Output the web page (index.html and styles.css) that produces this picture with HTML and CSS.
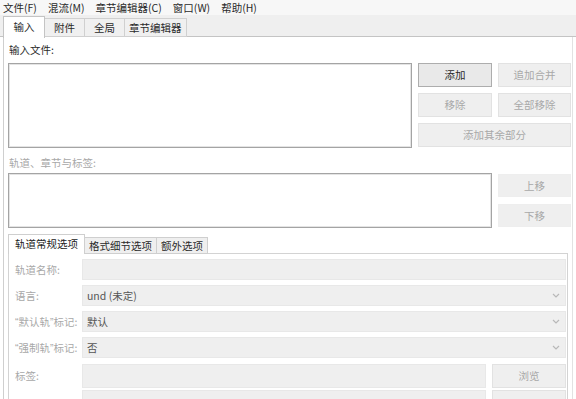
FILE: index.html
```html
<!DOCTYPE html>
<html lang="zh-CN">

<head>
  <meta charset="UTF-8">
  <title>MKVToolNix GUI</title>
  <link rel="stylesheet" href="styles.css">
</head>

<body>
  <nav class="menubar">
    <span>文件(F)</span>
    <span>混流(M)</span>
    <span>章节编辑器(C)</span>
    <span>窗口(W)</span>
    <span>帮助(H)</span>
  </nav>

  <div class="tabbar">
    <span class="tab active">输入</span>
    <span class="tab">附件</span>
    <span class="tab">全局</span>
    <span class="tab">章节编辑器</span>
  </div>

  <main class="page">
    <div class="label">输入文件:</div>
    <div class="files-row">
      <div class="listbox"></div>
      <div class="file-buttons">
        <button class="btn default">添加</button>
        <button class="btn" disabled>追加合并</button>
        <button class="btn" disabled>移除</button>
        <button class="btn" disabled>全部移除</button>
        <button class="btn wide" disabled>添加其余部分</button>
      </div>
    </div>

    <div class="label disabled">轨道、章节与标签:</div>
    <div class="tracks-row">
      <div class="listbox"></div>
      <div class="move-buttons">
        <button class="btn flat" disabled>上移</button>
        <button class="btn flat" disabled>下移</button>
      </div>
    </div>

    <div class="subtabs">
      <span class="subtab active">轨道常规选项</span>
      <span class="subtab">格式细节选项</span>
      <span class="subtab">额外选项</span>
    </div>
    <section class="subpanel">
      <div class="form">
        <label>轨道名称:</label>
        <div class="field"></div>

        <label>语言:</label>
        <div class="field select">und (未定)<svg class="chevron" viewBox="0 0 8 5"><path d="M1 1l3 3 3-3" /></svg></div>

        <label><span class="q">“</span>默认轨<span class="q">”</span>标记:</label>
        <div class="field select">默认<svg class="chevron" viewBox="0 0 8 5"><path d="M1 1l3 3 3-3" /></svg></div>

        <label><span class="q">“</span>强制轨<span class="q">”</span>标记:</label>
        <div class="field select">否<svg class="chevron" viewBox="0 0 8 5"><path d="M1 1l3 3 3-3" /></svg></div>

        <label class="tall">标签:</label>
        <div class="with-button">
          <div class="field"></div>
          <button class="btn" disabled>浏览</button>
        </div>

        <span class="tall"></span>
        <div class="with-button">
          <div class="field"></div>
          <span class="btn"></span>
        </div>
      </div>
    </section>
  </main>
</body>

</html>
```

FILE: styles.css
```css
* {
  box-sizing: border-box;
}

body {
  margin: 0;
  background: #fff;
  color: #2a2a2a;
  font-family: "Noto Sans CJK SC", "Noto Sans", sans-serif;
  font-size: 10.5px;
  line-height: 14px;
  overflow: hidden;
}

.menubar {
  display: flex;
  gap: 11px;
  height: 15px;
  padding: 1px 3px 0;
  background: #f7f7f7;
}

.tabbar {
  display: flex;
  height: 22px;
  padding: 2px 0 0 3px;
  background: #efefef;
  border-bottom: 1px solid #c4c4c4;
}

.tab {
  display: flex;
  align-items: center;
  justify-content: center;
  min-width: 40px;
  height: 19px;
  margin-top: 1px;
  padding: 0 4px;
  background: #f0f0f0;
  border: 1px solid #d0d0d0;
  border-left: none;
}

.tab.active {
  margin-top: -1px;
  height: 22px;
  padding-bottom: 2px;
  min-width: 42px;
  background: #fff;
  border-left: 1px solid #c4c4c4;
  border-color: #c4c4c4;
  border-bottom: none;
}

.page {
  margin: 0 3px 0 3px;
  padding: 5px 1px 0 4px;
  border-left: 1px solid #cfcfcf;
  border-right: 1px solid #e2e2e2;
  height: 362px;
}

.label {
  height: 16px;
  line-height: 16px;
  margin-bottom: 5px;
  padding-left: 1px;
}

.label.disabled {
  margin-top: 7px;
  margin-bottom: 2px;
  color: #a8a8a8;
}

.listbox {
  background: #fff;
  border: 1px solid #a4a4a4;
  box-shadow: inset 0 0 0 1px #e4e4e4;
}

.files-row {
  display: grid;
  grid-template-columns: 404px 1fr;
  gap: 6px;
  height: 85px;
}

.file-buttons {
  display: grid;
  grid-template-columns: 74px 73px;
  grid-auto-rows: 24px;
  gap: 6px;
}

.btn {
  font: inherit;
  color: #a8a8a8;
  background: #efefef;
  border: 1px solid #e2e2e2;
  padding: 0;
  margin: 0;
}

.btn.default {
  color: #2a2a2a;
  background: #e9e9e9;
  border-color: #adadad;
}

.btn.wide {
  grid-column: span 2;
}

.btn.flat {
  border-color: #eeeeee;
}

.tracks-row {
  display: grid;
  grid-template-columns: 484px 1fr;
  gap: 6px;
  height: 55px;
}

.move-buttons {
  display: grid;
  grid-template-rows: 23px 23px;
  row-gap: 7px;
  padding-top: 1px;
}

.subtabs {
  display: flex;
  margin-top: 6px;
  height: 20px;
  position: relative;
  z-index: 1;
}

.subtab {
  display: flex;
  align-items: center;
  height: 17px;
  margin-top: 3px;
  padding: 0 4px;
  background: #efefef;
  border: 1px solid #cfcfcf;
  border-left: none;
}

.subtab.active {
  height: 20px;
  margin-top: 0;
  padding: 0 6px 1px;
  background: #fff;
  border-left: 1px solid #cfcfcf;
  border-bottom: none;
  color: #222;
}

.subpanel {
  margin: -1px 3px 0 0;
  padding: 5px 1px 0 6px;
  border: 1px solid #d3d3d3;
  border-bottom: none;
  height: 160px;
}

.form {
  display: grid;
  grid-template-columns: 67px 1fr;
  grid-auto-rows: 21px;
  row-gap: 5px;
  color: #a8a8a8;
}

.form label {
  display: flex;
  align-items: center;
  white-space: nowrap;
}

.q {
  font-family: "Liberation Sans", sans-serif;
}

.form .tall {
  margin-top: 1px;
  height: 24px;
}

.field {
  display: flex;
  align-items: center;
  padding-left: 4px;
  background: #efefef;
  border: 1px solid #e8e8e8;
  color: #555;
}

.select {
  justify-content: space-between;
  padding-right: 5px;
}

.chevron {
  width: 8px;
  height: 5px;
  fill: none;
  stroke: #b8b8b8;
  stroke-width: 1.2;
}

.with-button {
  display: grid;
  grid-template-columns: 404px 74px;
  gap: 6px;
  margin-top: 1px;
  height: 24px;
}
```
